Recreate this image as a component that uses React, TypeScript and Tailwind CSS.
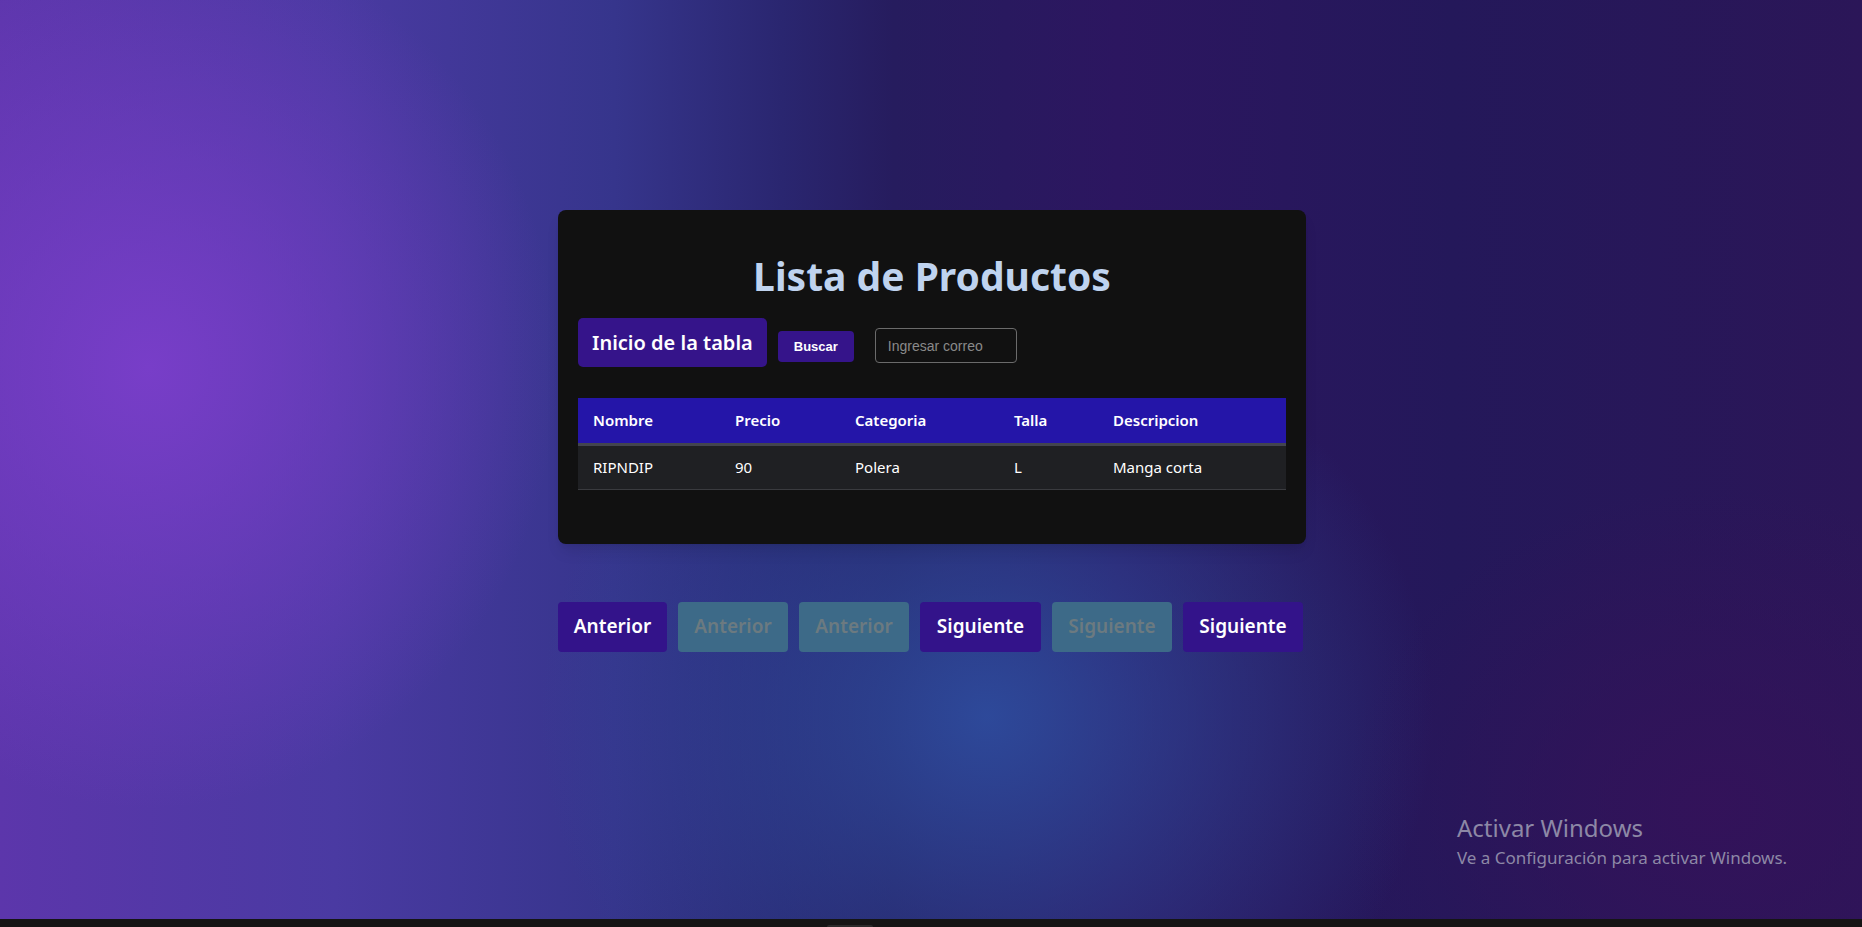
import React from 'react';

type Producto = {
  nombre: string;
  precio: number;
  categoria: string;
  talla: string;
  descripcion: string;
};

const productos: Producto[] = [
  { nombre: 'RIPNDIP', precio: 90, categoria: 'Polera', talla: 'L', descripcion: 'Manga corta' },
];

const columnas = [
  { label: 'Nombre', w: 'w-[142px]' },
  { label: 'Precio', w: 'w-[120px]' },
  { label: 'Categoria', w: 'w-[159px]' },
  { label: 'Talla', w: 'w-[99px]' },
  { label: 'Descripcion', w: '' },
];

const App: React.FC = () => {
  return (
    <div className="relative flex h-[927px] flex-col overflow-hidden font-['Noto_Sans',sans-serif]">
      {/* fondo degradado */}
      <main className="flex flex-1 flex-col items-center bg-[radial-gradient(ellipse_22%_48%_at_8%_40%,rgba(122,62,202,0.95),rgba(122,62,202,0)_100%),radial-gradient(ellipse_24%_45%_at_53%_78%,rgba(46,78,160,0.9),rgba(46,78,160,0)_100%),radial-gradient(ellipse_20%_35%_at_92%_88%,rgba(52,18,90,0.9),rgba(52,18,90,0)_100%),linear-gradient(90deg,#5c36ab_0%,#4a3aa2_18%,#36358c_33%,#2a2670_42%,#261c5e_48%,#2c1660_60%,#24185a_78%,#2b1658_100%)] pt-[210px]">
        <div className="w-[750px] pl-[2px]">
          {/* tarjeta */}
          <section className="rounded-lg bg-[#111111] px-5 pb-[54px] pt-[42px] shadow-lg">
            <h1 className="text-center text-[39px] font-bold leading-[48px] text-[#bfd3ef]">
              Lista de Productos
            </h1>

            <div className="mt-[18px] flex items-start">
              <button className="h-[49px] rounded-[5px] bg-[#35148a] px-[14px] text-[20px] font-semibold text-white">
                Inicio de la tabla
              </button>
              <button className="ml-[11px] mt-[13px] h-[31px] rounded-[4px] bg-[#35148a] px-4 font-['Liberation_Sans',Arial,sans-serif] text-[13px] font-bold text-white">
                Buscar
              </button>
              <input
                type="text"
                placeholder="Ingresar correo"
                className="ml-[21px] mt-[10px] h-[35px] w-[142px] rounded-[4px] border border-[#6b6b6b] bg-transparent px-[12px] font-['Liberation_Sans',Arial,sans-serif] text-[14px] text-white placeholder:text-[#8a8a8a] focus:outline-none"
              />
            </div>

            <table className="mt-[31px] w-full border-collapse text-left text-[15px]">
              <thead>
                <tr className="border-b-[3px] border-[#43454e] bg-[#2415a8] text-white">
                  {columnas.map((c) => (
                    <th key={c.label} className={`${c.w} h-[46px] px-[15px] font-semibold`}>
                      {c.label}
                    </th>
                  ))}
                </tr>
              </thead>
              <tbody>
                {productos.map((p) => (
                  <tr key={p.nombre} className="border-b border-[#3a3b3f] bg-[#1f2023] text-white">
                    <td className="h-[45px] px-[15px]">{p.nombre}</td>
                    <td className="h-[45px] px-[15px]">{p.precio}</td>
                    <td className="h-[45px] px-[15px]">{p.categoria}</td>
                    <td className="h-[45px] px-[15px]">{p.talla}</td>
                    <td className="h-[45px] px-[15px]">{p.descripcion}</td>
                  </tr>
                ))}
              </tbody>
            </table>
          </section>

          {/* paginacion */}
          <div className="mt-[58px] flex gap-[11px]">
            <button className="h-[50px] w-[109px] rounded-[4px] bg-[#33138a] text-[19px] font-semibold text-white">
              Anterior
            </button>
            <button disabled className="h-[50px] w-[110px] rounded-[4px] bg-[#3d6a88] text-[19px] font-semibold text-[#6c7a80]">
              Anterior
            </button>
            <button disabled className="h-[50px] w-[110px] rounded-[4px] bg-[#3d6a88] text-[19px] font-semibold text-[#6c7a80]">
              Anterior
            </button>
            <button className="h-[50px] w-[121px] rounded-[4px] bg-[#33138a] text-[19px] font-semibold text-white">
              Siguiente
            </button>
            <button disabled className="h-[50px] w-[120px] rounded-[4px] bg-[#3d6a88] text-[19px] font-semibold text-[#6c7a80]">
              Siguiente
            </button>
            <button className="h-[50px] w-[120px] rounded-[4px] bg-[#33138a] text-[19px] font-semibold text-white">
              Siguiente
            </button>
          </div>
        </div>
      </main>

      {/* marca de agua de Windows */}
      <div className="pointer-events-none absolute left-[1457px] top-[812px] text-[#8d88a6]">
        <div className="text-[24px] leading-[32px]">Activar Windows</div>
        <div className="mt-[2px] text-[17px] leading-[24px]">Ve a Configuración para activar Windows.</div>
      </div>

      {/* barra de tareas */}
      <div className="relative h-[8px] bg-[#151515]">
        <div className="absolute left-[827px] top-[6px] h-[2px] w-[46px] rounded-t bg-[#2b2b2b]" />
      </div>
    </div>
  );
};

export default App;
